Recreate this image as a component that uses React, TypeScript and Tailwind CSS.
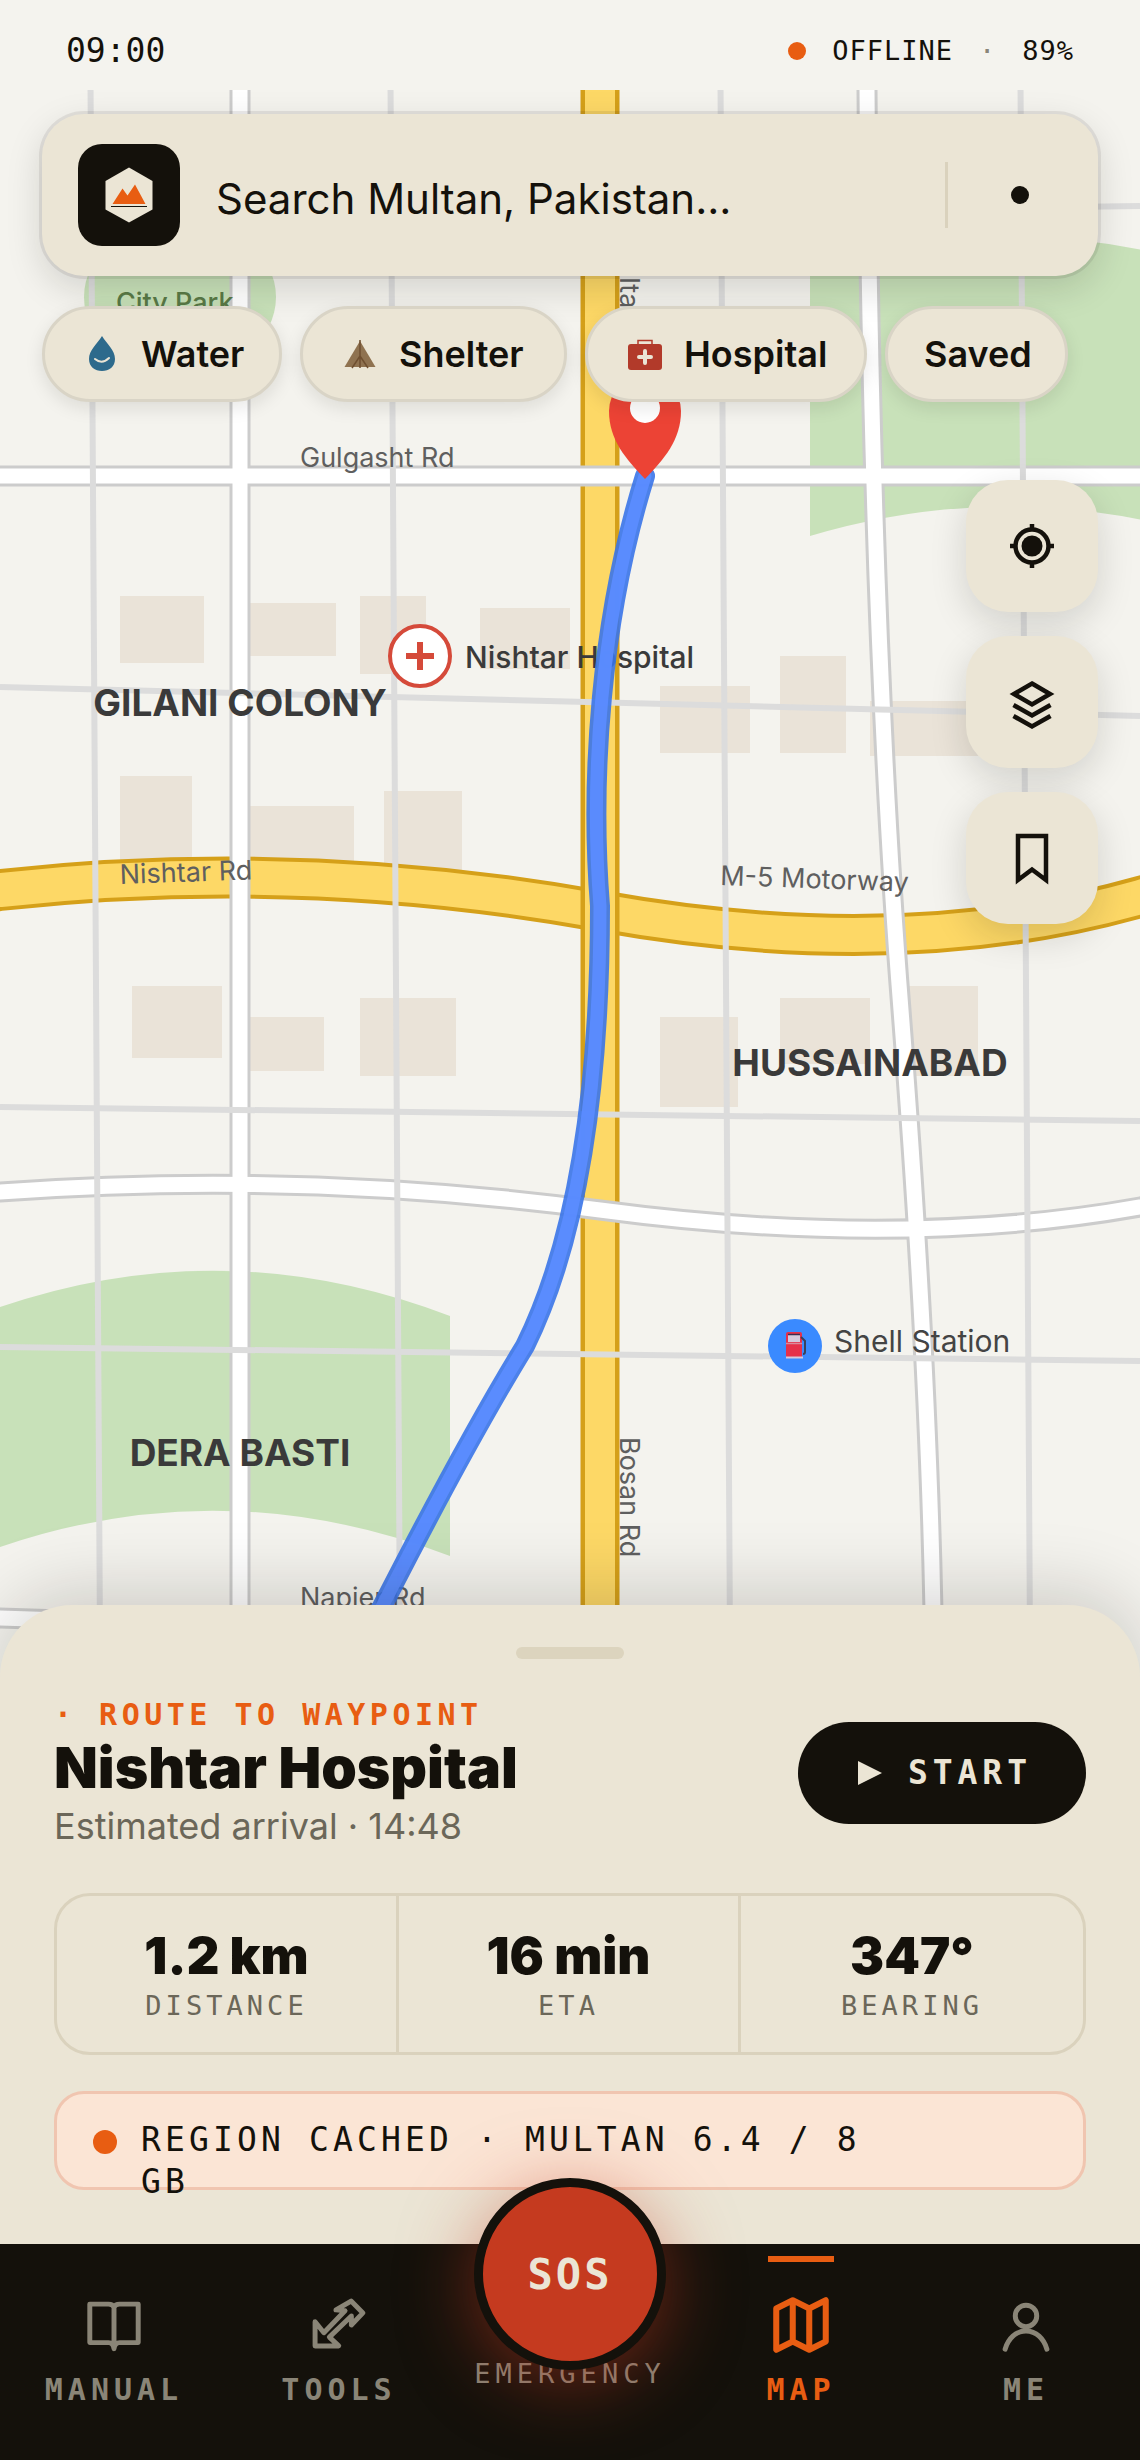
import { ReactNode } from 'react';

type Rect = [x: number, y: number, w: number, h: number];

const buildings: Rect[] = [
  [120, 596, 84, 67],
  [240, 603, 96, 53],
  [360, 596, 66, 78],
  [480, 608, 90, 61],
  [120, 776, 72, 90],
  [240, 806, 114, 66],
  [384, 791, 78, 90],
  [660, 686, 90, 67],
  [780, 656, 66, 97],
  [870, 701, 120, 55],
  [132, 986, 90, 72],
  [240, 1017, 84, 54],
  [360, 998, 96, 78],
  [660, 1017, 78, 90],
  [780, 998, 90, 66],
  [900, 986, 78, 90],
];

const highways = [
  { d: 'M-60 897 L0 890 Q300 857 600 911 Q900 965 1140 897 L1200 880', casing: 42, fill: 34 },
  { d: 'M600 0 V1700', casing: 39, fill: 30 },
];

const streets = [
  'M0 476 H1140',
  'M240 0 V1700',
  'M-60 1196 L0 1192 Q300 1170 600 1210 Q900 1250 1140 1207 L1200 1196',
  'M866 0 L867 90 Q871 630 901 1010 Q933 1420 934 1700',
  'M-60 1616 L0 1618 Q300 1626 600 1650',
];

const lanes = [
  'M90 0 L100 1640 V1700',
  'M390 0 L400 1640 V1700',
  'M720 0 L730 1640 V1700',
  'M1020 0 L1030 1640 V1700',
  'M600 214 L1140 206',
  'M0 687 L1140 716',
  'M0 1107 L1140 1121',
  'M0 1347 L1140 1361',
];

const route =
  'M645 476 C600 620 590 780 600 906 C600 1100 575 1245 525 1346 Q455 1460 345 1680';

function CityMap() {
  return (
    <svg viewBox="0 90 1140 1587" className="block w-full" role="img" aria-label="Map of Multan">
      <rect width="1140" height="1700" fill="#f4f3ee" />

      {/* Parks */}
      <g fill="#c8e1b9">
        <ellipse cx="180" cy="297" rx="96" ry="78" />
        <path d="M810 266 Q1005 208 1200 264 V534 Q1005 478 810 536Z" />
        <path d="M0 1307 Q225 1230 450 1316 V1556 Q225 1470 0 1547Z" />
      </g>

      <g fill="#eae3d8">
        {buildings.map(([x, y, w, h]) => (
          <rect key={`${x}-${y}`} x={x} y={y} width={w} height={h} />
        ))}
      </g>

      {/* Roads: casing first, then the fill on top */}
      <g fill="none">
        {highways.map((road) => (
          <g key={road.d}>
            <path d={road.d} stroke="#d5a019" strokeWidth={road.casing} />
            <path d={road.d} stroke="#fdd866" strokeWidth={road.fill} />
          </g>
        ))}
        {streets.map((d) => (
          <path key={d} d={d} stroke="#cccccc" strokeWidth="21" />
        ))}
        {streets.map((d) => (
          <path key={d} d={d} stroke="#ffffff" strokeWidth="15" />
        ))}
        {lanes.map((d) => (
          <path key={d} d={d} stroke="#dcdcdc" strokeWidth="6" />
        ))}
      </g>

      <g className="font-['Inter',sans-serif] text-[27px]" fill="#5f5f5f">
        <text x="116" y="312" fill="#5a7a47" className="font-medium">City Park</text>
        <text x="300" y="467">Gulgasht Rd</text>
        <text transform="translate(120 884) rotate(-2)">Nishtar Rd</text>
        <text transform="translate(720 885) rotate(2)">M-5 Motorway</text>
        <text transform="translate(620 237) rotate(90)">Multan Rd</text>
        <text transform="translate(620 1437) rotate(90)">Bosan Rd</text>
        <text x="300" y="1607">Napier Rd</text>
      </g>
      <g
        className="font-['Inter',sans-serif] text-[37px] font-bold"
        fill="#3a3a3a"
        textAnchor="middle"
      >
        <text x="240" y="716">GILANI COLONY</text>
        <text x="870" y="1076">HUSSAINABAD</text>
        <text x="240" y="1466">DERA BASTI</text>
      </g>

      {/* Places */}
      <circle cx="420" cy="656" r="30" fill="#ffffff" stroke="#d54a3a" strokeWidth="4" />
      <path d="M406 656 H434 M420 642 V670" stroke="#d54a3a" strokeWidth="6" />
      <text
        x="465"
        y="668"
        fill="#3a3a3a"
        className="font-['Inter',sans-serif] text-[30px] font-medium"
      >
        Nishtar Hospital
      </text>

      <circle cx="795" cy="1346" r="27" fill="#3a8aff" />
      <rect x="786" y="1332" width="16" height="26" rx="2" fill="#e5304a" />
      <rect x="788" y="1335" width="12" height="7" fill="#d5c9dc" />
      <path d="M788 1334.500 H800" stroke="#3b2c52" strokeWidth="1.500" />
      <path d="M786 1343.500 H802" stroke="#d98a9c" strokeWidth="1.500" />
      <path d="M786 1357.500 H803" stroke="#d5c9dc" strokeWidth="2" />
      <path d="M801 1337 L805 1341 V1352 Q805 1354 803 1354" fill="none" stroke="#39405c" strokeWidth="2" />
      <text x="834" y="1352" fill="#444444" className="font-['Inter',sans-serif] text-[30px]">
        Shell Station
      </text>

      {/* Active route */}
      <g fill="none" strokeLinecap="round">
        <path d={route} stroke="#3a74e8" strokeOpacity="0.9" strokeWidth="20" />
        <path d={route} stroke="#5b8cff" strokeOpacity="0.95" strokeWidth="13" />
      </g>
      <path
        d="M645 479 C626 459 609 440 609 411 A36 36 0 0 1 681 411 C681 440 664 459 645 479Z"
        fill="#ec4335"
      />
      <circle cx="645" cy="408" r="15" fill="#ffffff" />
    </svg>
  );
}

function LogoIcon() {
  return (
    <svg viewBox="0 0 102 102" className="size-full" aria-hidden="true">
      <path d="M51 23.500 L74.500 37 V65.500 L51 78.500 L27.500 65.500 V37Z" fill="#ebe5d5" />
      <path d="M34.500 60 L44.500 44.500 L49.500 51.500 L57 40.500 L67.500 60Z" fill="#e85d12" />
      <path d="M33 62.500 H69" stroke="#14110b" strokeWidth="1.200" />
    </svg>
  );
}

const chips: { label: string; width: string; icon?: ReactNode }[] = [
  {
    label: 'Water',
    width: 'w-[240px]',
    icon: (
      <>
        <path d="M21 3 C26 11 34 17 34 26 C34 34 28 38 21 38 C14 38 8 34 8 26 C8 17 16 11 21 3Z" fill="#2d6a8c" />
        <path d="M14 26 Q21 32 28 25" fill="none" stroke="#ebe5d5" strokeWidth="2" strokeLinecap="round" />
      </>
    ),
  },
  {
    label: 'Shelter',
    width: 'w-[267px]',
    icon: (
      <>
        <path d="M21 8 L36.500 34 H5.500Z" fill="#8f7250" />
        <path d="M21 7 V35 M21 23 L13 35 M21 23 L29 35" fill="none" stroke="#6f4f30" strokeWidth="1.500" />
      </>
    ),
  },
  {
    label: 'Hospital',
    width: 'w-[282px]',
    icon: (
      <>
        <rect x="4" y="11" width="34" height="26" rx="3" fill="#b23a2a" />
        <path d="M14 11 V7.500 H28 V11" fill="none" stroke="#b23a2a" strokeWidth="1.500" />
        <path d="M21 18 V30 M15 24 H27" stroke="#ebe5d5" strokeWidth="4" strokeLinecap="round" />
      </>
    ),
  },
  { label: 'Saved', width: 'w-[183px]' },
];

const mapActions: { label: string; icon: ReactNode }[] = [
  {
    label: 'Locate me',
    icon: (
      <>
        <circle cx="30" cy="30" r="16.500" />
        <circle cx="30" cy="30" r="10.500" fill="#14110b" stroke="none" />
        <path d="M30 8 V14 M30 46 V52 M8 30 H14 M46 30 H52" />
      </>
    ),
  },
  {
    label: 'Layers',
    icon: <path d="M30 11.500 L48 22 L30 32.500 L12 22Z M11.500 33 L30 43.500 L48.500 33 M11.500 44 L30 54.500 L48.500 44" />,
  },
  {
    label: 'Bookmark',
    icon: <path d="M16 8 H44 V52 L30 41.500 L16 52Z" />,
  },
];

const stats = [
  { label: 'DISTANCE', value: '1.2 km' },
  { label: 'ETA', value: '16 min' },
  { label: 'BEARING', value: '347°' },
];

interface NavItemProps {
  label: string;
  active?: boolean;
  children: ReactNode;
}

function NavItem({ label, active, children }: NavItemProps) {
  return (
    <a
      href="#"
      aria-current={active ? 'page' : undefined}
      className={`relative flex flex-col items-center pt-12 ${active ? 'text-[#e85d12]' : 'text-[#8a8577]'}`}
    >
      {active && <span className="absolute top-3 h-1.5 w-[66px] bg-[#e85d12]" />}
      <svg
        viewBox="0 0 24 24"
        className="size-[66px]"
        fill="none"
        stroke="currentColor"
        strokeWidth={active ? 2.2 : 1.8}
        strokeLinecap="round"
        strokeLinejoin="round"
        aria-hidden="true"
      >
        {children}
      </svg>
      <span className="mt-3.5 text-[30px] leading-9 font-bold tracking-[5px]">{label}</span>
    </a>
  );
}

export default function App() {
  return (
    <div className="flex min-h-screen flex-col bg-[#f4f3ee] font-['Inter',sans-serif] text-[#14110b]">
      <header className="flex h-[90px] items-center justify-between px-[66px] pt-3 font-['DejaVu_Sans_Mono',monospace]">
        <time className="text-[33px]">09:00</time>
        <div className="flex items-center gap-[26px] text-[27px] tracking-[1px]">
          <span className="size-[18px] rounded-full bg-[#e85d12]" />
          <span>OFFLINE</span>
          <span className="text-[#8a8577]">·</span>
          <span>89%</span>
        </div>
      </header>

      <main className="relative">
        <CityMap />

        <div className="absolute inset-x-0 top-0 flex flex-col px-[42px] pt-6">
          <div className="flex h-[162px] items-center rounded-[42px] bg-[#ebe5d5] px-9 shadow-[0_0_0_3px_rgba(20,17,11,0.08),0_12px_36px_rgba(20,17,11,0.15)]">
            <div className="size-[102px] shrink-0 overflow-hidden rounded-3xl bg-[#14110b]">
              <LogoIcon />
            </div>
            <input
              type="text"
              aria-label="Search"
              placeholder="Search Multan, Pakistan..."
              className="mx-9 min-w-0 flex-1 pt-1.5 text-[42px] outline-none placeholder:text-[#14110b]"
            />
            <span className="h-[66px] w-[3px] bg-[#dad2bd]" />
            <button type="button" aria-label="Record" className="ml-[30px] flex size-[84px] items-center justify-center">
              <span className="size-[18px] rounded-full bg-[#14110b]" />
            </button>
          </div>

          <div className="mt-[30px] flex gap-[18px]">
            {chips.map((chip) => (
              <button
                key={chip.label}
                type="button"
                className={`flex h-24 items-center gap-[18px] rounded-full border-3 border-[#d9d4c6] bg-[#ebe5d5] px-9 text-[36px] font-semibold shadow-[0_6px_18px_rgba(20,17,11,0.1)] ${chip.width}`}
              >
                {chip.icon && (
                  <svg viewBox="0 0 42 42" className="size-[42px] shrink-0" aria-hidden="true">
                    {chip.icon}
                  </svg>
                )}
                {chip.label}
              </button>
            ))}
          </div>

          <div className="mt-[78px] flex flex-col items-end gap-6">
            {mapActions.map((action) => (
              <button
                key={action.label}
                type="button"
                aria-label={action.label}
                className="flex size-[132px] items-center justify-center rounded-[42px] bg-[#ebe5d5] shadow-[0_12px_36px_rgba(20,17,11,0.15)]"
              >
                <svg viewBox="0 0 60 60" className="size-[60px]" fill="none" stroke="#14110b" strokeWidth="4.500">
                  {action.icon}
                </svg>
              </button>
            ))}
          </div>
        </div>
      </main>

      <section className="relative -mt-[72px] flex flex-1 flex-col rounded-t-[72px] bg-[#ebe5d5] px-[54px] pb-[54px] shadow-[0_-12px_72px_rgba(20,17,11,0.18)]">
        <div className="mx-auto mt-[42px] h-3 w-[108px] rounded-md bg-[#dcd4be]" />

        <div className="mt-9 flex items-center justify-between">
          <div>
            <p className="font-['DejaVu_Sans_Mono',monospace] text-[30px] leading-10 font-bold tracking-[0.15em] text-[#e85d12]">
              · ROUTE TO WAYPOINT
            </p>
            <h1 className="text-[57px] leading-[66px] font-black">Nishtar Hospital</h1>
            <p className="text-[36px] leading-[50px] text-[#6b6759]">Estimated arrival · 14:48</p>
          </div>
          <button
            type="button"
            className="flex h-[102px] items-center gap-5 rounded-full bg-[#14110b] px-[54px] font-['DejaVu_Sans_Mono',monospace] text-[33px] font-bold tracking-[0.15em] text-[#ebe5d5]"
          >
            <svg viewBox="0 0 36 36" className="size-9" aria-hidden="true">
              <path d="M6 6 L30 18 L6 30Z" fill="currentColor" />
            </svg>
            START
          </button>
        </div>

        <dl className="mt-[42px] grid h-[162px] grid-cols-3 divide-x-3 divide-[#dad2bd] rounded-[36px] border-3 border-[#dad2bd]">
          {stats.map((stat) => (
            <div key={stat.label} className="flex flex-col-reverse items-center justify-center">
              <dt className="mt-1 font-['DejaVu_Sans_Mono',monospace] text-[27px] leading-8 tracking-[0.15em] text-[#6b6759]">
                {stat.label}
              </dt>
              <dd className="text-[51px] leading-[60px] font-black">{stat.value}</dd>
            </div>
          ))}
        </dl>

        <div className="mt-9 flex h-[99px] gap-6 rounded-[30px] border-3 border-[#f0c5b0] bg-[#fbe5d5] px-9 pt-[25px]">
          <span className="mt-[11px] size-6 shrink-0 rounded-full bg-[#e85d12]" />
          <p className="max-w-[740px] font-['DejaVu_Sans_Mono',monospace] text-[33px] leading-[42px] tracking-[0.125em]">
            REGION CACHED · MULTAN 6.4 / 8 GB
          </p>
        </div>
      </section>

      <nav className="relative grid h-[216px] grid-cols-[38fr_37fr_40fr_37fr_38fr] bg-[#14110b] font-['DejaVu_Sans_Mono',monospace]">
        <NavItem label="MANUAL">
          <path d="M12 5.500 Q11.500 4.400 10 4.400 H3.200 V18.400 H10 Q11.700 18.400 12 20.600 Q12.300 18.400 14 18.400 H20.800 V4.400 H14 Q12.500 4.400 12 5.500 V20.600" />
        </NavItem>
        <NavItem label="TOOLS">
          <path d="M3.300 10.800 L6.500 14.800 L14.200 6.800 L10.900 6.500 L16.400 3.300 L20.700 7.600 L16.500 12 V8.700 L8.500 16.400 L11.900 19.600 H3.300Z" />
        </NavItem>
        <div className="flex justify-center pt-28">
          <span className="text-[27px] leading-9 tracking-[5px] text-[#8a8577]">EMERGENCY</span>
          <button
            type="button"
            className="absolute -top-[66px] size-48 rounded-full border-9 border-[#14110b] bg-[#c53a1f] text-[42px] font-bold tracking-[3px] text-[#ebe5d5] shadow-[0_12px_72px_rgba(197,58,31,0.5)]"
          >
            SOS
          </button>
        </div>
        <NavItem label="MAP" active>
          <path d="M3 6 L9 3 L15 6 L21 3 V18 L15 21 L9 18 L3 21Z M9 3 V18 M15 6 V21" />
        </NavItem>
        <NavItem label="ME">
          <circle cx="12" cy="8.700" r="3.900" />
          <path d="M4.400 20.800 C5.500 17 8.300 14.200 12 14.200 S18.500 17 19.600 20.800" />
        </NavItem>
      </nav>
    </div>
  );
}
